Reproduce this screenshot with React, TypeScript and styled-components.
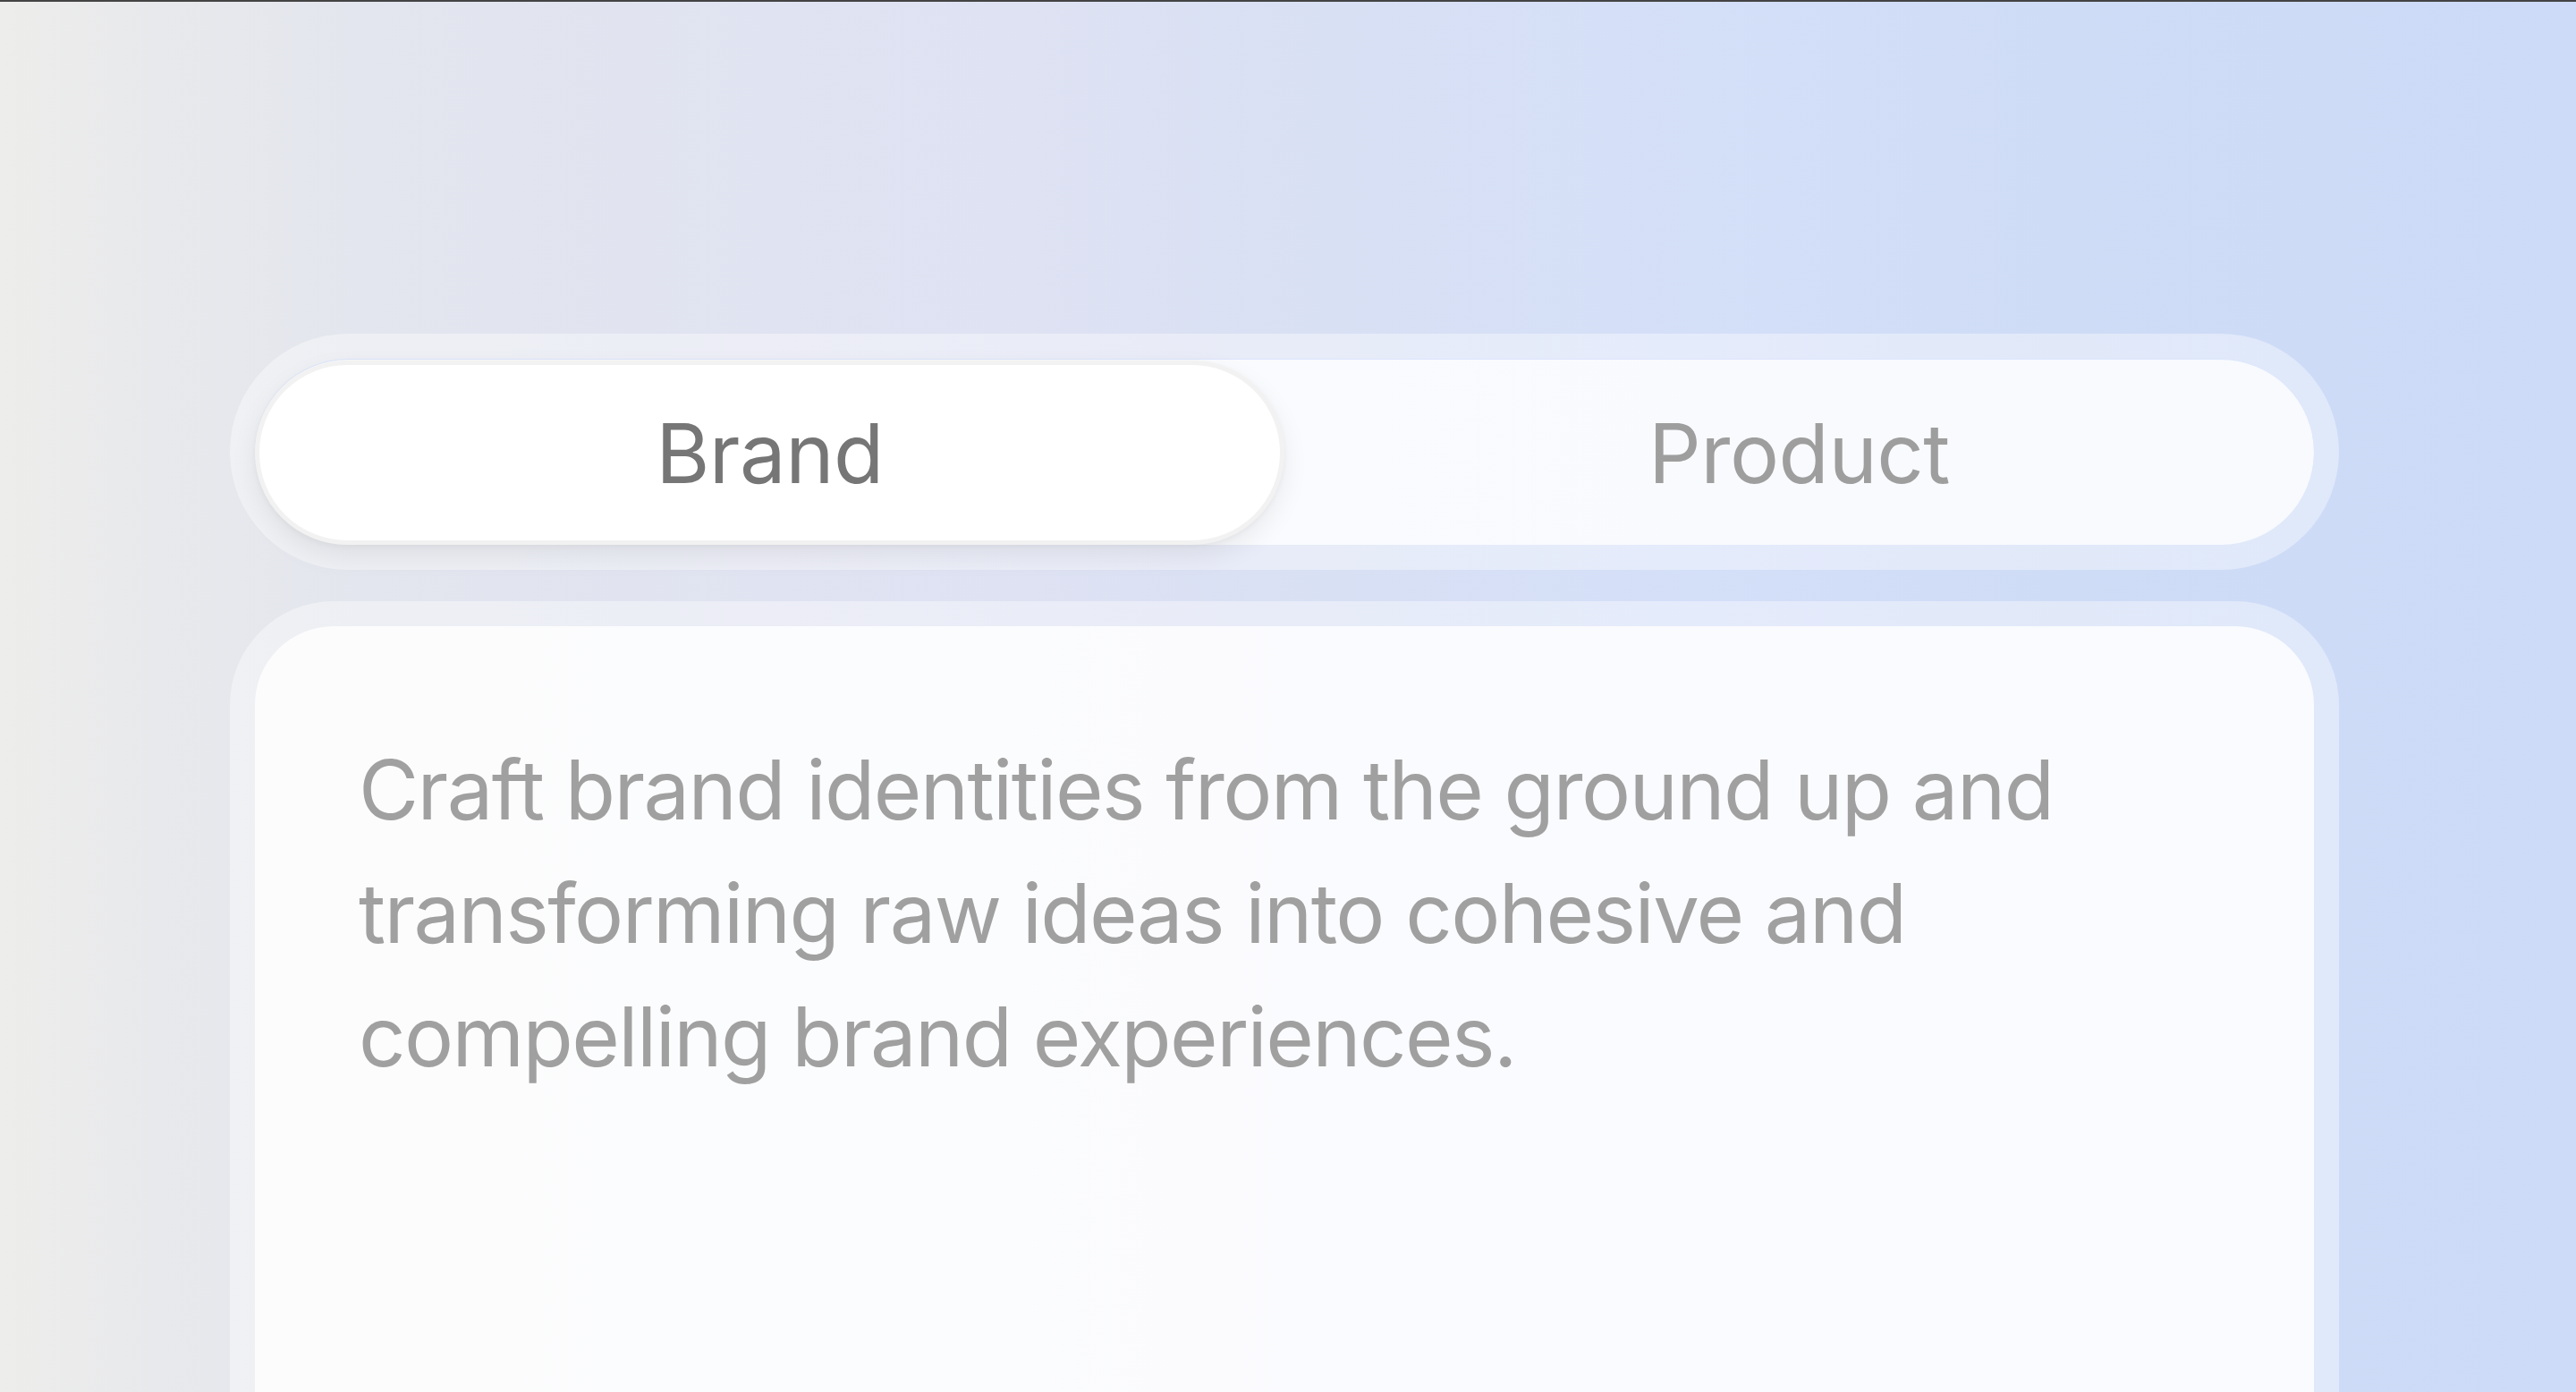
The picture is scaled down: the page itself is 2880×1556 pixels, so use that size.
import React, { useState } from "react";
import styled, { createGlobalStyle } from "styled-components";

const GlobalStyle = createGlobalStyle`
  html, body {
    margin: 0;
    padding: 0;
    height: 100%;
    overflow: hidden;
  }
  body {
    font-family: Inter, "Noto Sans", "Liberation Sans", sans-serif;
    background: linear-gradient(
      90deg,
      #ededeb 0%,
      #e8e9ec 6%,
      #e3e6ee 14%,
      #e0e3f1 30%,
      #dee2f3 40%,
      #d8e0f4 52%,
      #d4dff8 66%,
      #cfdcf6 80%,
      #cddaf8 100%
    );
  }
`;

const Page = styled.main`
  box-sizing: border-box;
  height: 1556px;
  border-top: 2px solid #444444;
  padding: 371px 0 0 257px;
  display: flex;
  flex-direction: column;
  gap: 35px;
`;

const Frame = styled.div<{ $radius: number }>`
  box-sizing: border-box;
  width: 2358px;
  padding: 28px;
  background: rgba(255, 255, 255, 0.38);
  border-radius: ${(p) => p.$radius}px;
`;

const Track = styled.div`
  display: grid;
  grid-template-columns: 1fr 1fr;
  height: 208px;
  border-radius: 104px;
  background: rgba(255, 255, 255, 0.76);
  box-shadow: inset 0 1px 0 rgba(200, 215, 250, 0.6);
`;

const Tab = styled.button<{ $active: boolean }>`
  box-sizing: border-box;
  height: 206px;
  margin-top: 2px;
  border-radius: 103px;
  border: 5px solid ${(p) => (p.$active ? "#f2f2f2" : "transparent")};
  background: ${(p) => (p.$active ? "#ffffff" : "transparent")};
  box-shadow: ${(p) =>
    p.$active ? "0 12px 30px rgba(0, 0, 0, 0.07), 0 2px 6px rgba(0,0,0,0.04)" : "none"};
  font-family: Inter, "Noto Sans", "Liberation Sans", sans-serif;
  font-size: 92px;
  font-weight: 400;
  letter-spacing: -0.5px;
  color: ${(p) => (p.$active ? "#767676" : "#9e9e9e")};
  cursor: pointer;
  padding: 0;
  display: flex;
  align-items: center;
  justify-content: center;
`;

const Panel = styled.div`
  box-sizing: border-box;
  height: 1000px;
  border-radius: 88px;
  background: rgba(255, 255, 255, 0.8);
  padding: 114px 116px;
`;

const Description = styled.p`
  margin: 0;
  font-family: Inter, "Noto Sans", "Liberation Sans", sans-serif;
  font-size: 92px;
  line-height: 138px;
  font-weight: 400;
  letter-spacing: -1.6px;
  color: #a0a0a0;
`;

const content: Record<string, string> = {
  Brand:
    "Craft brand identities from the ground up and transforming raw ideas into cohesive and compelling brand experiences.",
  Product:
    "Design digital products that are intuitive, useful and delightful to use.",
};

export default function App() {
  const [active, setActive] = useState<"Brand" | "Product">("Brand");
  return (
    <>
      <GlobalStyle />
      <Page>
        <Frame $radius={132}>
          <Track>
            {(["Brand", "Product"] as const).map((t) => (
              <Tab key={t} $active={active === t} onClick={() => setActive(t)}>
                {t}
              </Tab>
            ))}
          </Track>
        </Frame>
        <Frame $radius={116}>
          <Panel>
            <Description>{content[active]}</Description>
          </Panel>
        </Frame>
      </Page>
    </>
  );
}
